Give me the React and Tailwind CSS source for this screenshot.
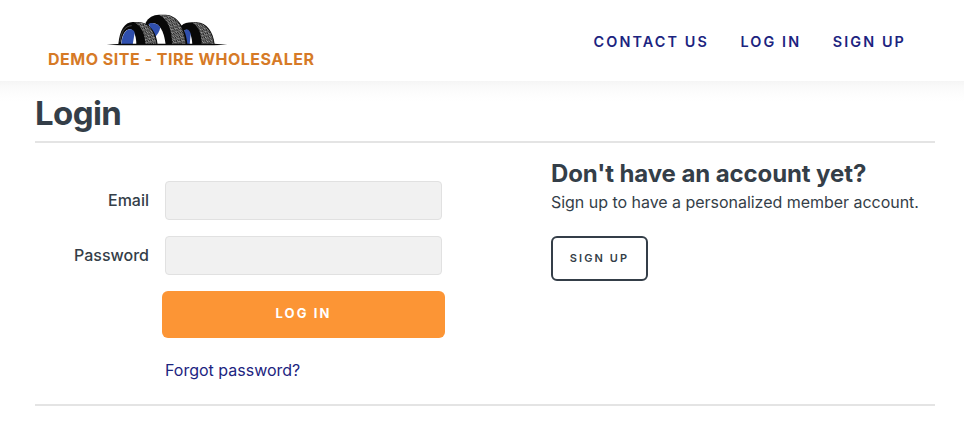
import React from "react";

function Logo() {
  return (
    <svg width="122" height="33" viewBox="18 24 366 99" aria-hidden="true">
      <defs>
        <pattern id="tread" width="12" height="10" patternUnits="userSpaceOnUse" patternTransform="rotate(-14)">
          <rect width="12" height="10" fill="#1e1e1e" />
          <path d="M0 2 L5 5 M6 1 L12 4 M1 9 L5 6 M7 9 L11 6" stroke="#d6d6d6" strokeWidth="2.4" />
        </pattern>
      </defs>
      {/* right tire */}
      <path d="M244 62 C252 55 262 52 276 52 H290 C320 53 340 80 344 119 H246 Z" fill="#080808" />
      <path d="M277 53 H290 C319 55 338 84 342 119 H305 C305 88 297 64 277 53 Z" fill="url(#tread)" />
      <path d="M253 119 V76 C268 66 276 95 277 119 Z" fill="#fff" />
      <path d="M253 76 C262 69 271 76 272 88 L269 119 H259 Z" fill="#2f4fae" />
      {/* centre tire */}
      <path d="M137 53 C145 37 160 29 177 29 H197 C234 31 259 72 262 119 H200 L137 119 Z" fill="#080808" />
      <path d="M178 30 H197 C232 32 254 74 257 119 H216 C217 80 205 44 178 30 Z" fill="url(#tread)" />
      <path d="M146 58 C169 46 191 66 197 119 H165 Z" fill="#fff" />
      <path d="M146 57 C157 49 174 58 181 67 C179 80 172 89 164 98 Z" fill="#2f4fae" />
      {/* left tire */}
      <path d="M55 119 C58 77 74 51 98 51 H117 C150 53 169 82 173 119 Z" fill="#080808" />
      <path d="M102 52 H117 C148 54 166 84 170 119 H136 C136 88 125 63 102 52 Z" fill="url(#tread)" />
      <path d="M63 119 C65 91 74 73 91 73 C103 75 109 98 109 119 Z" fill="#fff" />
      <path d="M64 119 C66 91 75 73 92 73 C99 74 103 78 104 83 L98 119 Z" fill="#2f4fae" />
      <path d="M60 111 C62 82 74 63 95 62" fill="none" stroke="#8b8b8b" strokeWidth="1.5" />
      <path d="M20 119 L62 116.5 H342 L382 119 L342 121 H62 Z" fill="#080808" />
    </svg>
  );
}

function Field({ label, type }) {
  return (
    <label className="flex h-[39px] items-center">
      <span className="w-[114px] pb-0.5 text-right text-[16px] font-medium">{label}</span>
      <input type={type} className="ml-4 h-[39px] w-[277px] rounded-[4px] border border-[#e1e1e1] bg-[#f1f1f1] px-3 outline-none" />
    </label>
  );
}

export default function App() {
  return (
    <div className="flex h-[432px] w-[964px] flex-col overflow-hidden bg-white font-['Inter',sans-serif] whitespace-nowrap text-[#343e48]">
      <header className="flex h-[81px] shrink-0 justify-between pr-[57px] pl-12">
        <a className="flex flex-col pt-[13px] text-[#d67a27]">
          <span className="pl-[58px]"><Logo /></span>
          <span className="mt-[3px] text-[16px] leading-[20px] font-bold tracking-[0.5px]">DEMO SITE - TIRE WHOLESALER</span>
        </a>
        <nav className="flex h-[84px] items-center gap-[31.5px] pr-px text-[14.4px] font-semibold tracking-[2.1px] text-[#1c2480]">
          <a>CONTACT US</a>
          <a>LOG IN</a>
          <a>SIGN UP</a>
        </nav>
      </header>
      <main className="h-[351px] bg-[linear-gradient(#f5f5f5_0px,#fafafa_6px,#fefefe_16px,#ffffff_22px)] px-[35px] pt-3">
        <h1 className="h-12 text-[33px] leading-[40px] font-bold tracking-[-0.6px]">Login</h1>
        <div className="flex h-[265px] w-[900px] border-y-2 border-[#e4e4e4]">
          <form className="flex w-[516px] flex-col pt-[38px]">
            <Field label="Email" type="email" />
            <div className="h-4" />
            <Field label="Password" type="password" />
            <button type="button" className="mt-[15.5px] ml-[127px] h-[47px] w-[283px] rounded-[6px] bg-[#fc9535] text-[13px] font-bold tracking-[2.1px] text-white">LOG IN</button>
            <a className="mt-[20.5px] ml-[130px] text-[16px] leading-6 text-[#1c2480]">Forgot password?</a>
          </form>
          <section className="flex flex-col items-start pt-[16px]">
            <h2 className="text-[24px] leading-[30px] font-bold tracking-[-0.1px]">Don't have an account yet?</h2>
            <p className="mt-[1px] text-[16px] leading-6 tracking-[-0.03px]">Sign up to have a personalized member account.</p>
            <button type="button" className="mt-[22px] h-[45px] w-[97px] rounded-[6px] border-2 border-[#343e48] text-[11px] font-semibold tracking-[2.1px]">SIGN UP</button>
          </section>
        </div>
      </main>
    </div>
  );
}
